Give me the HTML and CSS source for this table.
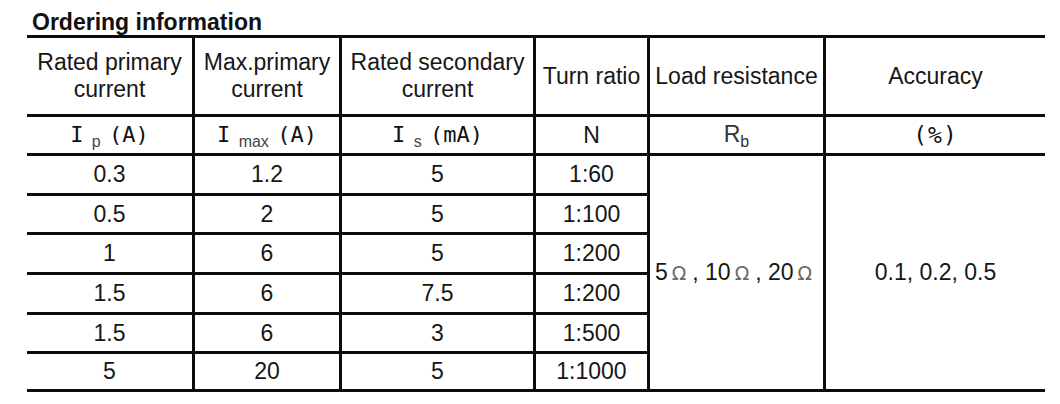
FILE: index.html
```html
<!DOCTYPE html>
<html>
<head>
<meta charset="utf-8">
<link rel="stylesheet" href="styles.css">
</head>
<body>
<h2 class="title">Ordering information</h2>
<table class="order">
  <colgroup>
    <col class="w1"><col class="w2"><col class="w3"><col class="w4"><col class="w5"><col class="w6">
  </colgroup>
  <tr class="head">
    <td class="first">Rated primary<br>current</td>
    <td>Max.primary<br>current</td>
    <td>Rated secondary<br>current</td>
    <td>Turn ratio</td>
    <td>Load resistance</td>
    <td class="last">Accuracy</td>
  </tr>
  <tr class="units">
    <td class="first"><span class="mono">I</span> <sub class="sub">p</sub> <span class="mono">(A)</span></td>
    <td><span class="mono">I</span> <sub class="sub">max</sub> <span class="mono">(A)</span></td>
    <td><span class="mono">I</span> <sub class="sub">s</sub> <span class="mono">(mA)</span></td>
    <td>N</td>
    <td><span class="rb">R<sub class="rsub">b</sub></span></td>
    <td class="last"><span class="mono pct">(%)</span></td>
  </tr>
  <tr class="r1">
    <td class="first">0.3</td><td>1.2</td><td>5</td><td>1:60</td>
    <td rowspan="6">5<span class="ohm">Ω</span>, 10<span class="ohm">Ω</span>, 20<span class="ohm">Ω</span></td>
    <td rowspan="6" class="last">0.1, 0.2, 0.5</td>
  </tr>
  <tr class="r2"><td class="first">0.5</td><td>2</td><td>5</td><td>1:100</td></tr>
  <tr class="r3"><td class="first">1</td><td>6</td><td>5</td><td>1:200</td></tr>
  <tr class="r4"><td class="first">1.5</td><td>6</td><td>7.5</td><td>1:200</td></tr>
  <tr class="r5"><td class="first">1.5</td><td>6</td><td>3</td><td>1:500</td></tr>
  <tr class="r6"><td class="first">5</td><td>20</td><td>5</td><td>1:1000</td></tr>
</table>
</body>
</html>
```

FILE: styles.css
```css
html, body {
  margin: 0;
  padding: 0;
  background: #ffffff;
}

body {
  font-family: "Liberation Sans", Arial, sans-serif;
  color: #161616;
}

.title {
  margin: 9px 0 0 32px;
  font-size: 23px;
  line-height: 26px;
  font-weight: bold;
  color: #111;
}

.order {
  margin-left: 27px;
  width: 1018px;
  table-layout: fixed;
  border-collapse: collapse;
  border-top: 3px solid #0c0c0c;
  border-bottom: 3px solid #0c0c0c;
  font-size: 23px;
}

.w1 { width: 166.5px; }
.w2 { width: 147px; }
.w3 { width: 194px; }
.w4 { width: 114px; }
.w5 { width: 176px; }
.w6 { width: 220.5px; }

.order td {
  border: 3px solid #0c0c0c;
  padding: 0 2px;
  text-align: center;
  vertical-align: middle;
  white-space: nowrap;
  line-height: 27px;
}

.order td.first { border-left: none; }
.order td.last { border-right: none; }

.head { height: 79px; }
.units { height: 39px; }
.r1 { height: 40px; }
.r2 { height: 39px; }
.r3 { height: 40px; }
.r4 { height: 40px; }
.r5 { height: 39px; }
.r6 { height: 38px; }

.mono {
  font-family: "DejaVu Sans Mono", "Liberation Mono", monospace;
  font-size: 22px;
  color: #111;
}

.pct {
  font-size: 23px;
  letter-spacing: 1px;
}

.sub {
  font-family: "Liberation Sans", Arial, sans-serif;
  font-size: 16px;
  color: #444;
  vertical-align: -5px;
  line-height: 1;
  margin: 0 2px;
}

.rb {
  color: #333;
}

.rsub {
  font-size: 16px;
  vertical-align: -5px;
  line-height: 1;
}

.ohm {
  font-family: "DejaVu Sans", sans-serif;
  font-size: 19px;
  color: #6a6a6a;
  margin: 0 6px 0 4px;
}
```
